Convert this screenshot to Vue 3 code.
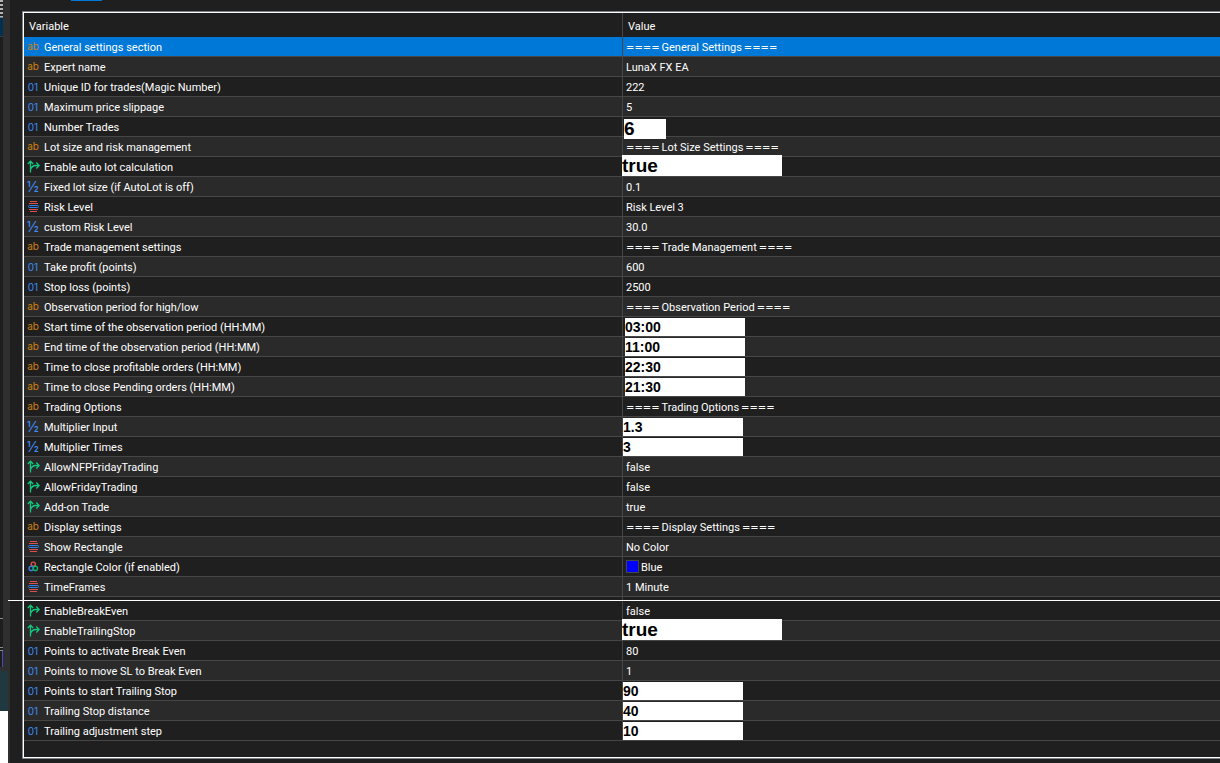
<template>
	<div class="window">
		<aside class="gutter">
			<div class="gutter-top">
				<div class="slice">
					<div class="slice-dots"></div>
					<div class="slice-selected"></div>
					<div class="slice-body"></div>
					<div class="slice-lines"></div>
					<div class="slice-mark"></div>
				</div>
			</div>
			<div class="gutter-teal"></div>
			<div class="gutter-white"></div>
		</aside>

		<main class="panel">
			<div class="tab-strip">
				<div class="active-tab"></div>
			</div>

			<div class="grid-frame">
				<table class="inputs-table">
					<thead>
						<tr>
							<th scope="col">Variable</th>
							<th scope="col">Value</th>
						</tr>
					</thead>
					<tbody v-for="(group, g) in groups" :key="g">
						<tr v-if="g > 0" class="divider">
							<td></td>
							<td></td>
						</tr>
						<tr v-for="row in group" :key="row.name" class="row" :class="{ selected: row.name === selectedName }" @click="selectedName = row.name">
							<td class="variable">
								<div class="cell">
									<span class="icon" :class="row.type" aria-hidden="true">
										<template v-if="glyphs[row.type]">{{ glyphs[row.type] }}</template>
										<svg v-else-if="row.type === 'bool'" viewBox="0 0 14 13" fill="none" stroke="currentColor">
											<path d="M4.5 12.5V1.2M1.8 4L4.5 1.2L7.2 4M4.5 9.5C5.5 7 7 5.5 9.5 5.5H13M10.3 2.5L13.2 5.5L10.3 8.5" stroke-width="1.3" />
										</svg>
										<svg v-else-if="row.type === 'enum'" viewBox="0 0 14 13" fill="none">
											<path d="M4 1.5H11M4 11.5H11" stroke="#d9504c" />
											<path d="M3 3.5H12M3 9.5H12" stroke="#d9504c" />
											<rect x="2.5" y="5.5" width="10" height="2" rx="1" stroke="#3280e8" />
										</svg>
										<svg v-else viewBox="0 0 14 13" fill="none" stroke-width="1.4">
											<circle cx="7.3" cy="4.2" r="2.1" stroke="#e0504c" />
											<circle cx="5.2" cy="8.4" r="2.1" stroke="#3280e8" />
											<circle cx="9.4" cy="8.4" r="2.1" stroke="#10b070" />
										</svg>
									</span>
									<label v-if="row.edit" :for="fieldId(row)">{{ row.name }}</label>
									<span v-else>{{ row.name }}</span>
								</div>
							</td>
							<td class="value">
								<input v-if="row.edit" :id="fieldId(row)" v-model="row.value" class="field" :class="row.edit" type="text" spellcheck="false" />
								<div v-else-if="row.section" class="cell section">
									<span class="rule">====</span>
									<span>{{ row.section }}</span>
									<span class="rule">====</span>
								</div>
								<div v-else class="cell">
									<span v-if="row.type === 'color'" class="swatch"></span>
									<span>{{ row.value }}</span>
								</div>
							</td>
						</tr>
					</tbody>
				</table>
			</div>
		</main>
	</div>
</template>

<script setup>
import { ref, reactive } from "vue"

// Types drawn as text instead of an svg
const glyphs = {
	string: "ab",
	int: "01",
	double: "½"
}

const selectedName = ref("General settings section")

const groups = reactive([
	[
		{ type: "string", name: "General settings section", section: "General Settings" },
		{ type: "string", name: "Expert name", value: "LunaX FX EA" },
		{ type: "int", name: "Unique ID for trades(Magic Number)", value: "222" },
		{ type: "int", name: "Maximum price slippage", value: "5" },
		{ type: "int", name: "Number Trades", value: "6", edit: "short" },
		{ type: "string", name: "Lot size and risk management", section: "Lot Size Settings" },
		{ type: "bool", name: "Enable auto lot calculation", value: "true", edit: "large" },
		{ type: "double", name: "Fixed lot size (if AutoLot is off)", value: "0.1" },
		{ type: "enum", name: "Risk Level", value: "Risk Level 3" },
		{ type: "double", name: "custom Risk Level", value: "30.0" },
		{ type: "string", name: "Trade management settings", section: "Trade Management" },
		{ type: "int", name: "Take profit (points)", value: "600" },
		{ type: "int", name: "Stop loss (points)", value: "2500" },
		{ type: "string", name: "Observation period for high/low", section: "Observation Period" },
		{ type: "string", name: "Start time of the observation period (HH:MM)", value: "03:00", edit: "time" },
		{ type: "string", name: "End time of the observation period (HH:MM)", value: "11:00", edit: "time" },
		{ type: "string", name: "Time to close profitable orders (HH:MM)", value: "22:30", edit: "time" },
		{ type: "string", name: "Time to close Pending orders (HH:MM)", value: "21:30", edit: "time" },
		{ type: "string", name: "Trading Options", section: "Trading Options" },
		{ type: "double", name: "Multiplier Input", value: "1.3", edit: "number" },
		{ type: "double", name: "Multiplier Times", value: "3", edit: "number" },
		{ type: "bool", name: "AllowNFPFridayTrading", value: "false" },
		{ type: "bool", name: "AllowFridayTrading", value: "false" },
		{ type: "bool", name: "Add-on Trade", value: "true" },
		{ type: "string", name: "Display settings", section: "Display Settings" },
		{ type: "enum", name: "Show Rectangle", value: "No Color" },
		{ type: "color", name: "Rectangle Color (if enabled)", value: "Blue" },
		{ type: "enum", name: "TimeFrames", value: "1 Minute" }
	],
	[
		{ type: "bool", name: "EnableBreakEven", value: "false" },
		{ type: "bool", name: "EnableTrailingStop", value: "true", edit: "large" },
		{ type: "int", name: "Points to activate Break Even", value: "80" },
		{ type: "int", name: "Points to move SL to Break Even", value: "1" },
		{ type: "int", name: "Points to start Trailing Stop", value: "90", edit: "number" },
		{ type: "int", name: "Trailing Stop distance", value: "40", edit: "number" },
		{ type: "int", name: "Trailing adjustment step", value: "10", edit: "number" }
	]
])

function fieldId(row) {
	return "input-" + row.name.toLowerCase().replace(/[^a-z0-9]+/g, "-")
}
</script>

<style>
body {
	margin: 0;
	background: #1f1f1f;
}
</style>

<style scoped>
.window {
	display: flex;
	min-height: 100vh;
	overflow: hidden;
	background: #1f1f1f;
	color: #ffffff;
	font-family: Roboto, Tahoma, sans-serif;
	font-size: 11px;
	line-height: 17px;
}

/* Left gutter */
.gutter {
	display: flex;
	flex-direction: column;
	flex: 0 0 10px;
	background: #2f2f2f;
}

.gutter-top {
	height: 671px;
}

.slice {
	display: flex;
	flex-direction: column;
	width: 3px;
	height: 667px;
	background: #1d1d1d;
}

.slice-dots {
	height: 17px;
	background: repeating-linear-gradient(#b4b4b4 0 2px, #262626 2px 4px);
}

.slice-selected {
	height: 18px;
	background: #02304f;
	border-top: 1px solid #6b7a85;
	border-bottom: 1px solid #3c3c3c;
}

.slice-body {
	flex: 1;
	border-bottom: 1px solid #8c8c8c;
}

.slice-lines {
	height: 28px;
	border-bottom: 4px double #8c8c8c;
}

.slice-mark {
	height: 16px;
	border-right: 1px solid #4a4ab8;
}

.gutter-teal {
	width: 8px;
	height: 40px;
	background: #20383f;
}

.gutter-white {
	flex: 1;
	width: 8px;
	background: #ffffff;
}

/* Panel */
.panel {
	flex: 1;
	min-width: 0;
	padding: 0 0 4px 12px;
}

.tab-strip {
	height: 11px;
	padding-left: 49px;
}

.active-tab {
	width: 31px;
	height: 1px;
	background: #0078d7;
}

.grid-frame {
	border: 1px solid #7d8287;
	border-right: none;
	box-shadow: inset 1px 1px 0 #ffffff, inset 0 -1px 0 #ffffff;
	padding: 1px 0 17px 1px;
}

.inputs-table {
	width: 100%;
	table-layout: fixed;
	border-collapse: separate;
	border-spacing: 0;
}

th,
td {
	box-sizing: border-box;
	padding: 0;
	text-align: left;
}

th:first-child,
td:first-child {
	width: 50%;
}

th:last-child,
td:last-child {
	border-left: 1px solid #464646;
}

th {
	height: 24px;
	padding: 2px 0 0 5px;
	font-weight: 400;
}

.row td {
	height: 20px;
	border-bottom: 1px solid #464646;
}

.row:nth-child(even) td {
	background: #2a2a2a;
}

.divider ~ .row:nth-child(even) td {
	background: #1f1f1f;
}

.divider ~ .row:nth-child(odd) td {
	background: #2a2a2a;
}

.row.selected td {
	background: #0078d7;
}

/* The rule runs past the frame, over the gutter */
.divider td {
	position: relative;
	height: 4px;
}

.divider td::after {
	content: "";
	position: absolute;
	right: 0;
	bottom: 0;
	left: -1px;
	height: 1px;
	background: #ffffff;
}

.divider td:first-child::after {
	left: -16px;
}

.cell {
	display: flex;
	align-items: center;
	box-sizing: border-box;
	height: 19px;
	padding-top: 2px;
	white-space: pre;
}

.variable .cell {
	padding-left: 2px;
}

.value .cell {
	padding-left: 3px;
}

.section {
	gap: 2px;
}

.rule {
	font-family: "DejaVu Sans", Verdana, sans-serif;
	font-size: 10px;
}

/* Type icons */
.icon {
	display: flex;
	align-items: center;
	justify-content: center;
	box-sizing: border-box;
	flex: 0 0 14px;
	height: 15px;
	padding-bottom: 2px;
	margin-right: 4px;
	font-family: Inter, sans-serif;
	font-size: 10px;
	line-height: 13px;
}

.icon svg {
	width: 14px;
	height: 13px;
}

.icon.string {
	padding-bottom: 3px;
	color: #d08010;
}

.icon.int {
	padding-bottom: 0;
	color: #3c8cf4;
}

.icon.double {
	padding-bottom: 3px;
	color: #3c8cf4;
	font-size: 14px;
}

.icon.bool {
	color: #10c880;
}

.swatch {
	box-sizing: border-box;
	width: 13px;
	height: 13px;
	margin: 0 2px 2px 0;
	border: 1px solid #464646;
	background: #0000ff;
}

/* Editable values */
.field {
	display: block;
	box-sizing: border-box;
	width: 120px;
	height: 18px;
	padding: 0;
	border: none;
	border-radius: 0;
	outline: none;
	background: #ffffff;
	color: #000000;
	font-family: "Liberation Sans", Arial, sans-serif;
	font-size: 14px;
	font-weight: 700;
	line-height: 18px;
}

.field.time {
	margin-left: 2px;
}

/* Taller than the row, so they lie over its borders */
.field.short,
.field.large {
	position: relative;
	font-size: 19px;
}

.field.short {
	width: 42px;
	height: 20px;
	margin: 2px 0 -3px 1px;
}

.field.large {
	width: 160px;
	height: 21px;
	margin: -2px 0 0 -1px;
}
</style>
